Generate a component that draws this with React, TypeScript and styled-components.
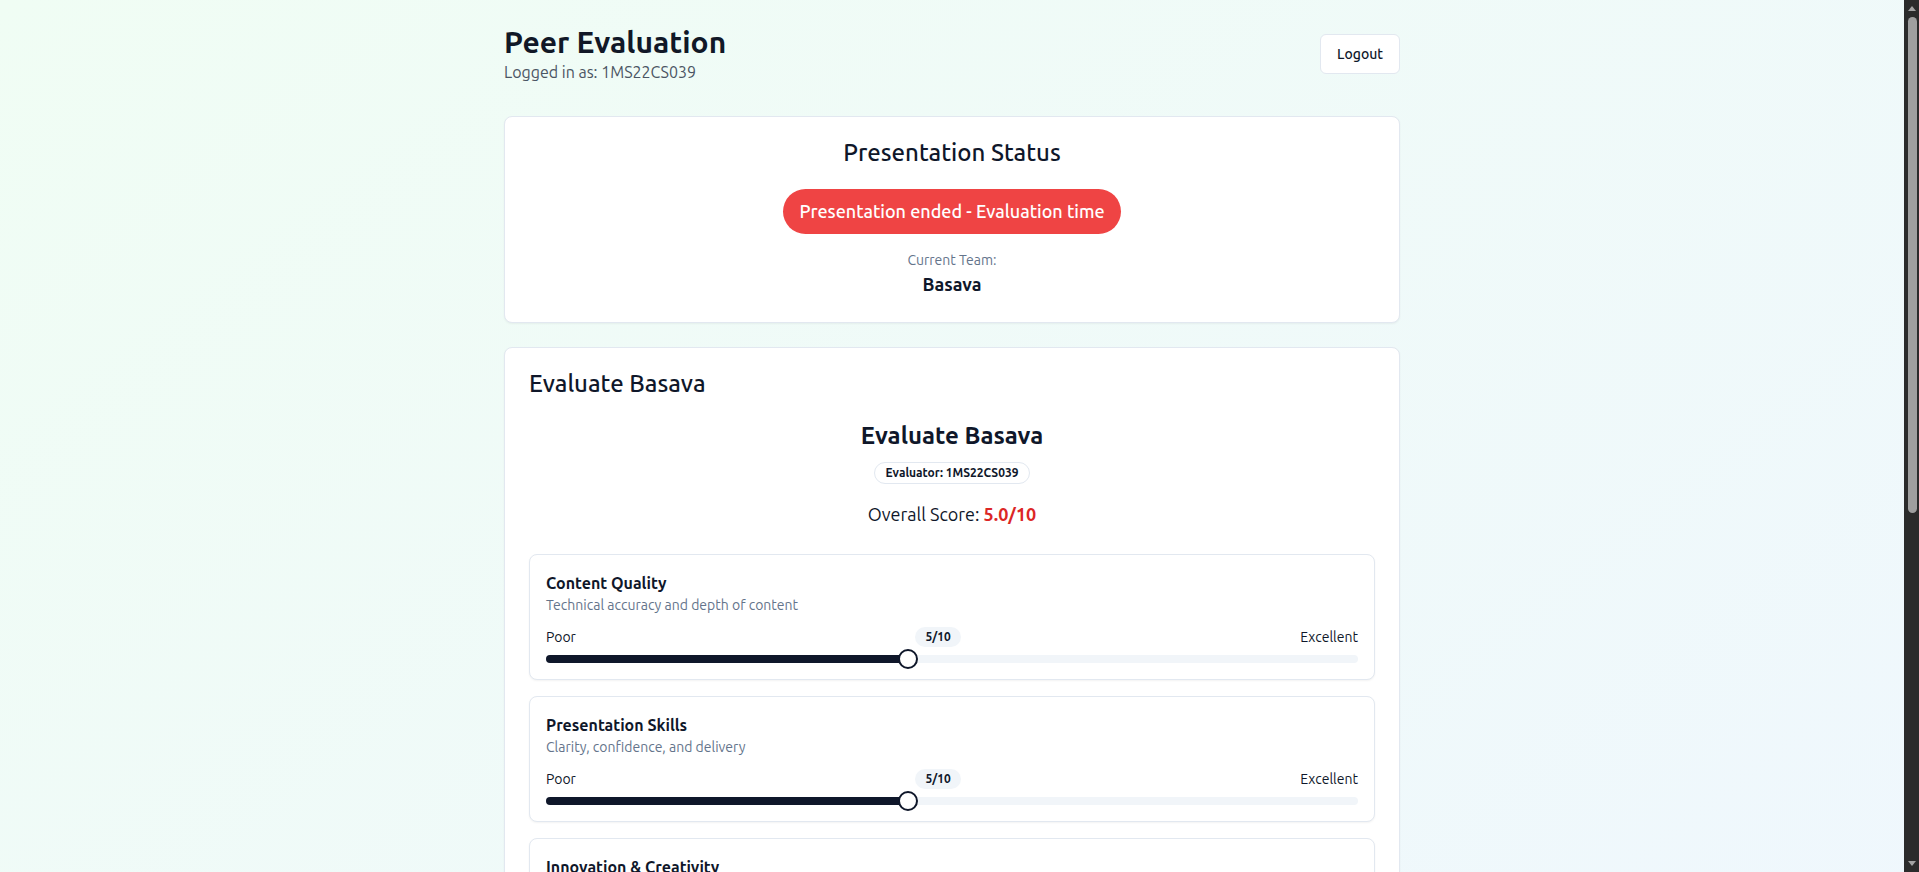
import React, { useLayoutEffect, useRef, useState } from "react";
import styled, { createGlobalStyle } from "styled-components";

const GlobalStyle = createGlobalStyle`
  *, *::before, *::after { box-sizing: border-box; }
  html, body { margin: 0; padding: 0; height: 100%; overflow: hidden; }
  body {
    font-family: "Ubuntu", "Noto Sans", sans-serif;
    color: #0f172a;
    -webkit-font-smoothing: antialiased;
  }
  h1, h2, h3, h4, p { margin: 0; }
`;

const Frame = styled.div`
  display: flex;
  height: 100vh;
`;

const Scroller = styled.main`
  flex: 1;
  min-width: 0;
  overflow-y: auto;
  scrollbar-width: none;
  &::-webkit-scrollbar { display: none; }
`;

const Rail = styled.div`
  width: 15px;
  flex-shrink: 0;
  display: flex;
  flex-direction: column;
  background: #2b2b2b;
`;

const RailButton = styled.div`
  height: 17px;
  display: flex;
  align-items: center;
  justify-content: center;
  color: #a3a3a3;
`;

const RailTrack = styled.div`
  flex: 1;
  display: flex;
  flex-direction: column;
  align-items: center;
`;

const RailThumb = styled.div`
  width: 9px;
  margin-left: 2px;
  border-radius: 5px;
  background: #9f9f9f;
`;

const Page = styled.div`
  min-height: 100vh;
  background: linear-gradient(to bottom right, #f0fdf4, #eff6ff);
  padding: 24px 16px;
`;

const Container = styled.div`
  max-width: 896px;
  margin: 0 auto;
  display: flex;
  flex-direction: column;
  gap: 24px;
`;

const Header = styled.header`
  display: flex;
  align-items: center;
  justify-content: space-between;
  margin-bottom: 8px;
`;

const Title = styled.h1`
  font-size: 30px;
  line-height: 36px;
  font-weight: 700;
  color: #111827;
`;

const Subtitle = styled.p`
  font-size: 16px;
  line-height: 24px;
  color: #4b5563;
`;

const OutlineButton = styled.button`
  height: 40px;
  padding: 0 16px;
  border: 1px solid #e2e8f0;
  border-radius: 6px;
  background: #ffffff;
  font-family: inherit;
  font-size: 14px;
  font-weight: 500;
  color: #0f172a;
  cursor: pointer;
`;

const Card = styled.section`
  background: #ffffff;
  border: 1px solid #e2e8f0;
  border-radius: 8px;
  box-shadow: 0 1px 2px rgba(0, 0, 0, 0.05);
`;

const CardHeader = styled.div<{ $center?: boolean }>`
  padding: 24px;
  text-align: ${(p) => (p.$center ? "center" : "left")};
`;

const CardTitle = styled.h2`
  font-size: 24px;
  line-height: 24px;
  font-weight: 500;
  color: #0f172a;
`;

const CardContent = styled.div<{ $center?: boolean }>`
  padding: 0 24px 24px;
  text-align: ${(p) => (p.$center ? "center" : "left")};
`;

const StatusPill = styled.div`
  display: inline-block;
  padding: 8px 16px;
  border-radius: 9999px;
  background: #ef4444;
  color: #ffffff;
  font-size: 18px;
  line-height: 29px;
  font-weight: 500;
`;

const TeamBlock = styled.div`
  margin-top: 16px;
`;

const MutedSmall = styled.p`
  font-size: 14px;
  line-height: 20px;
  color: #64748b;
`;

const TeamName = styled.p`
  font-size: 18px;
  line-height: 28px;
  font-weight: 700;
  color: #0f172a;
`;

const EvalIntro = styled.div`
  text-align: center;
`;

const EvalHeading = styled.h3`
  font-size: 24px;
  line-height: 32px;
  font-weight: 700;
  color: #0f172a;
`;

const OutlineBadge = styled.span`
  display: inline-flex;
  align-items: center;
  margin-top: 10px;
  padding: 2px 10px;
  border: 1px solid #e2e8f0;
  border-radius: 9999px;
  font-size: 12px;
  line-height: 16px;
  font-weight: 700;
  color: #0f172a;
`;

const Score = styled.p`
  margin-top: 16px;
  font-size: 18px;
  line-height: 28px;
  color: #0f172a;
`;

const ScoreValue = styled.span`
  font-weight: 700;
  color: #dc2626;
`;

const CriteriaList = styled.div`
  margin-top: 26px;
  display: flex;
  flex-direction: column;
  gap: 16px;
`;

const CriterionCard = styled.div`
  border: 1px solid #e2e8f0;
  border-radius: 8px;
  padding: 16px;
  background: #ffffff;
  box-shadow: 0 1px 2px rgba(0, 0, 0, 0.05);
`;

const CriterionTitle = styled.h4`
  font-size: 16px;
  line-height: 24px;
  font-weight: 700;
  color: #0f172a;
`;

const ScaleRow = styled.div`
  margin-top: 12px;
  margin-bottom: 8px;
  display: flex;
  align-items: center;
  justify-content: space-between;
  font-size: 14px;
  line-height: 20px;
  color: #0f172a;
`;

const ValueBadge = styled.span`
  display: inline-flex;
  align-items: center;
  padding: 2px 10px;
  border-radius: 9999px;
  background: #f1f5f9;
  font-size: 12px;
  line-height: 16px;
  font-weight: 700;
  color: #0f172a;
`;

const SliderTrack = styled.div`
  position: relative;
  height: 8px;
  border-radius: 9999px;
  background: #f1f5f9;
`;

const SliderRange = styled.div`
  height: 100%;
  border-radius: 9999px;
  background: #0f172a;
`;

const SliderThumb = styled.span`
  position: absolute;
  top: 50%;
  width: 20px;
  height: 20px;
  border-radius: 50%;
  border: 2px solid #0f172a;
  background: #ffffff;
  transform: translate(-50%, -50%);
`;

const Field = styled.div`
  margin-top: 16px;
  display: flex;
  flex-direction: column;
  gap: 8px;
`;

const Label = styled.label`
  font-size: 14px;
  line-height: 20px;
  font-weight: 500;
`;

const TextArea = styled.textarea`
  min-height: 76px;
  height: 76px;
  padding: 8px 12px;
  border: 1px solid #e2e8f0;
  border-radius: 6px;
  background: #ffffff;
  color: #0f172a;
  font-family: inherit;
  font-size: 14px;
  resize: vertical;
`;

const PrimaryButton = styled.button`
  margin-top: 16px;
  width: 100%;
  height: 40px;
  border: none;
  border-radius: 6px;
  background: #0f172a;
  color: #ffffff;
  font-family: inherit;
  font-size: 14px;
  font-weight: 500;
`;

const criteria = [
  { title: "Content Quality", desc: "Technical accuracy and depth of content", value: 5 },
  { title: "Presentation Skills", desc: "Clarity, confidence, and delivery", value: 5 },
  { title: "Innovation & Creativity", desc: "Originality and creative approach", value: 5 },
  { title: "Technical Implementation", desc: "Quality of implementation and demo", value: 5 },
  { title: "Q&A Handling", desc: "Ability to answer questions effectively", value: 5 },
];

const MIN = 1;
const MAX = 10;

function Criterion({ title, desc, value }: { title: string; desc: string; value: number }) {
  const pct = ((value - MIN) / (MAX - MIN)) * 100;
  return (
    <CriterionCard>
      <CriterionTitle>{title}</CriterionTitle>
      <MutedSmall>{desc}</MutedSmall>
      <ScaleRow>
        <span>Poor</span>
        <ValueBadge>{value}/10</ValueBadge>
        <span>Excellent</span>
      </ScaleRow>
      <SliderTrack>
        <SliderRange style={{ width: `${pct}%` }} />
        <SliderThumb style={{ left: `calc(10px + (100% - 20px) * ${pct / 100})` }} />
      </SliderTrack>
    </CriterionCard>
  );
}

function Arrow({ up }: { up?: boolean }) {
  return (
    <svg width="8" height="5" viewBox="0 0 8 5" aria-hidden="true">
      <path d={up ? "M0 5 L4 0 L8 5 Z" : "M0 0 L4 5 L8 0 Z"} fill="currentColor" />
    </svg>
  );
}

export default function App() {
  const scroller = useRef<HTMLElement>(null);
  const [thumb, setThumb] = useState(0);

  useLayoutEffect(() => {
    const el = scroller.current;
    if (!el) return;
    const track = el.clientHeight - 34;
    setThumb(Math.round((track * el.clientHeight) / el.scrollHeight));
  }, []);

  return (
    <>
      <GlobalStyle />
      <Frame>
        <Scroller ref={scroller}>
          <Page>
            <Container>
              <Header>
                <div>
                  <Title>Peer Evaluation</Title>
                  <Subtitle>Logged in as: 1MS22CS039</Subtitle>
                </div>
                <OutlineButton>Logout</OutlineButton>
              </Header>

              <Card>
                <CardHeader $center>
                  <CardTitle>Presentation Status</CardTitle>
                </CardHeader>
                <CardContent $center>
                  <StatusPill>Presentation ended - Evaluation time</StatusPill>
                  <TeamBlock>
                    <MutedSmall>Current Team:</MutedSmall>
                    <TeamName>Basava</TeamName>
                  </TeamBlock>
                </CardContent>
              </Card>

              <Card>
                <CardHeader>
                  <CardTitle>Evaluate Basava</CardTitle>
                </CardHeader>
                <CardContent>
                  <EvalIntro>
                    <EvalHeading>Evaluate Basava</EvalHeading>
                    <OutlineBadge>Evaluator: 1MS22CS039</OutlineBadge>
                    <Score>
                      Overall Score: <ScoreValue>5.0/10</ScoreValue>
                    </Score>
                  </EvalIntro>
                  <CriteriaList>
                    {criteria.map((c) => (
                      <Criterion key={c.title} {...c} />
                    ))}
                  </CriteriaList>
                  <Field>
                    <Label htmlFor="comments">Additional Comments (Optional)</Label>
                    <TextArea id="comments" placeholder="Share your feedback for the team..." />
                  </Field>
                  <PrimaryButton>Submit Evaluation</PrimaryButton>
                </CardContent>
              </Card>
            </Container>
          </Page>
        </Scroller>
        <Rail aria-hidden="true">
          <RailButton>
            <Arrow up />
          </RailButton>
          <RailTrack>
            <RailThumb style={{ height: thumb }} />
          </RailTrack>
          <RailButton>
            <Arrow />
          </RailButton>
        </Rail>
      </Frame>
    </>
  );
}
